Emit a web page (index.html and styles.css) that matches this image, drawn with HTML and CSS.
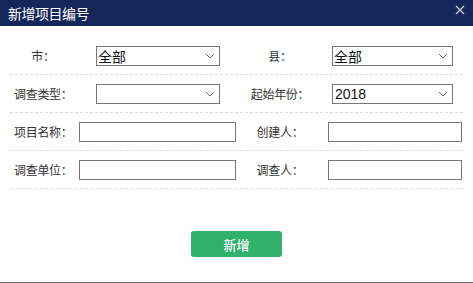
FILE: index.html
```html
<!DOCTYPE html>
<html lang="zh-CN">
<head>
    <meta charset="UTF-8">
    <meta name="viewport" content="width=device-width, initial-scale=1.0">
    <title>新增项目编号</title>
    <link rel="stylesheet" href="styles.css">
</head>
<body>
    <div class="dialog">
        <div class="dialog-header">
            <span class="dialog-title">新增项目编号</span>
            <svg class="close" width="10" height="10" viewBox="0 0 10 10">
                <path d="M1 1L9 9M9 1L1 9" stroke="#c9d0e0" stroke-width="1.3" fill="none"/>
            </svg>
        </div>

        <div class="form">
            <div class="row">
                <div class="label">市：</div>
                <div class="field">
                    <div class="select select-left">
                        <span>全部</span>
                        <svg class="arrow" width="10" height="6" viewBox="0 0 10 6"><path d="M1 1L5 5L9 1" stroke="#666" fill="none"/></svg>
                    </div>
                </div>
                <div class="label">县：</div>
                <div class="field">
                    <div class="select select-right">
                        <span>全部</span>
                        <svg class="arrow" width="10" height="6" viewBox="0 0 10 6"><path d="M1 1L5 5L9 1" stroke="#666" fill="none"/></svg>
                    </div>
                </div>
            </div>

            <div class="row">
                <div class="label">调查类型：</div>
                <div class="field">
                    <div class="select select-left">
                        <span></span>
                        <svg class="arrow" width="10" height="6" viewBox="0 0 10 6"><path d="M1 1L5 5L9 1" stroke="#666" fill="none"/></svg>
                    </div>
                </div>
                <div class="label">起始年份：</div>
                <div class="field">
                    <div class="select select-right">
                        <span class="num">2018</span>
                        <svg class="arrow" width="10" height="6" viewBox="0 0 10 6"><path d="M1 1L5 5L9 1" stroke="#666" fill="none"/></svg>
                    </div>
                </div>
            </div>

            <div class="row">
                <div class="label">项目名称：</div>
                <div class="field">
                    <input class="input input-left" type="text">
                </div>
                <div class="label">创建人：</div>
                <div class="field">
                    <input class="input input-right" type="text">
                </div>
            </div>

            <div class="row">
                <div class="label">调查单位：</div>
                <div class="field">
                    <input class="input input-left" type="text">
                </div>
                <div class="label">调查人：</div>
                <div class="field">
                    <input class="input input-right" type="text">
                </div>
            </div>
        </div>

        <div class="actions">
            <button class="btn-add">新增</button>
        </div>
    </div>
    <div class="page-edge"></div>
</body>
</html>
```

FILE: styles.css
```css
/* dialog */
body {
    margin: 0;
    padding: 0;
    background: #fff;
    font-family: "Noto Sans CJK SC", "Noto Sans", sans-serif;
    width: 473px;
    height: 283px;
    overflow: hidden;
    display: flex;
    flex-direction: column;
}

.dialog {
    flex: 1;
    background: #fff;
}

.dialog-header {
    height: 26px;
    background: #14265a;
    display: flex;
    align-items: center;
    justify-content: space-between;
    padding: 0 8px 0 8px;
}

.dialog-title {
    color: #fff;
    font-size: 14px;
    line-height: 26px;
    letter-spacing: -0.5px;
}

.close {
    margin-top: -6px;
}

.form {
    padding-top: 11px;
    margin: 0 10px;
}

.row {
    display: grid;
    grid-template-columns: 62px 171px 70px 150px;
    align-items: center;
    height: 37px;
    border-bottom: 1px dashed #dcdcdc;
}

.label {
    text-align: center;
    font-size: 12px;
    color: #333;
    white-space: nowrap;
    letter-spacing: -0.3px;
    padding-left: 4px;
}

.field {
    display: flex;
    align-items: center;
}

.select {
    box-sizing: border-box;
    height: 20px;
    border: 1px solid #777;
    display: flex;
    align-items: center;
    justify-content: space-between;
    padding: 0 4px 0 1px;
    font-size: 14px;
    color: #111;
}

.select .num {
    font-family: "Liberation Sans", Arial, sans-serif;
    padding-left: 1px;
}

.select-left {
    width: 124px;
    margin-left: 24px;
}

.select-right {
    width: 121px;
    margin-left: 19px;
}

.input {
    box-sizing: border-box;
    height: 20px;
    border: 1px solid #777;
    margin: 0;
    padding: 0 2px;
    outline: none;
}

.input-left {
    width: 157px;
    margin-left: 7px;
}

.input-right {
    width: 134px;
    margin-left: 15px;
}

.actions {
    display: flex;
    justify-content: center;
    padding-top: 42px;
}

.btn-add {
    width: 91px;
    height: 26px;
    background: #31b16c;
    color: #fff;
    border: none;
    border-radius: 3px;
    font-family: "Noto Sans CJK SC", sans-serif;
    font-size: 13px;
    font-weight: 500;
    cursor: pointer;
}

.page-edge {
    height: 1px;
    background: #666;
}
```
